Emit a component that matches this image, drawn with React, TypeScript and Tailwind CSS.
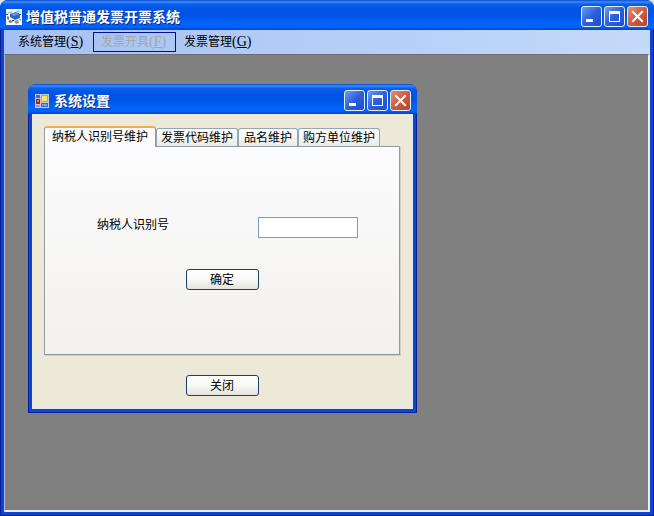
import React, { useState } from 'react';

interface MenuItem {
  label: string;
  hotkey: string;
  disabled?: boolean;
}

const menuItems: MenuItem[] = [
  { label: '系统管理', hotkey: 'S' },
  { label: '发票开具', hotkey: 'F', disabled: true },
  { label: '发票管理', hotkey: 'G' },
];

const tabs = ['纳税人识别号维护', '发票代码维护', '品名维护', '购方单位维护'];

const AppIcon = () => (
  <svg width="16" height="16" viewBox="0 0 16 16" aria-hidden="true">
    <rect width="16" height="16" fill="#f4f7fb" />
    <path d="M1 4l4-2 2 1-3 2zM10 2l3-1 2 2-3 1z" fill="#b4c4da" />
    <path d="M4 5l6-2 4 2v4l-5 2-5-3z" fill="#2f66c4" />
    <path d="M5 5l5-1 3 1-5 2z" fill="#6d9be8" />
    <path d="M1 7l2 1v3l-2-1zM2 12l3-1 2 2-3 1z" fill="#6f7c8c" />
    <path d="M8 12l4-1 1 3-3 1zM13 10l2 0v2z" fill="#8c99aa" />
    <path d="M0 5h2v1H0zM6 11h2v1H6zM14 5h1v1h-1z" fill="#33465f" />
  </svg>
);

const FormIcon = () => (
  <svg width="16" height="16" viewBox="-1 -1 16 16" aria-hidden="true">
    <rect width="14" height="14" fill="#c5cbd8" />
    <rect x="1" y="1" width="4" height="3" fill="#4a6cb4" />
    <rect x="6" y="1" width="7" height="7" fill="#e3a21a" />
    <rect x="7" y="2" width="5" height="5" fill="#ffe07a" />
    <rect x="1" y="5" width="4" height="5" fill="#a8241c" />
    <rect x="2" y="6" width="2" height="2" fill="#e8705c" />
    <rect x="1" y="11" width="4" height="2" fill="#8fa0c2" />
    <rect x="6" y="9" width="7" height="4" fill="#3f68b8" />
    <rect x="7" y="10" width="5" height="2" fill="#7d9fe0" />
  </svg>
);

const captionButton =
  'flex size-[21px] items-center justify-center rounded-[3px] border border-[#e6eefc] bg-linear-to-br';

const CaptionButtons = () => (
  <div className="flex gap-0.5">
    <button type="button" aria-label="最小化" className={`${captionButton} from-[#6f9bf2] via-[#2c5fdc] to-[#1b4fd0]`}>
      <svg width="19" height="19" viewBox="0 0 19 19">
        <rect x="4" y="12" width="7" height="3" fill="#fff" />
      </svg>
    </button>
    <button type="button" aria-label="最大化" className={`${captionButton} from-[#6f9bf2] via-[#2c5fdc] to-[#1b4fd0]`}>
      <svg width="19" height="19" viewBox="0 0 19 19">
        <path d="M4 4h11v11H4zM5 7v7h9V7z" fill="#fff" fillRule="evenodd" />
      </svg>
    </button>
    <button type="button" aria-label="关闭窗口" className={`${captionButton} from-[#e28f7c] via-[#cf5a40] to-[#b8442c]`}>
      <svg width="19" height="19" viewBox="0 0 19 19">
        <path d="M5 5l9 9M14 5l-9 9" stroke="#fff" strokeWidth="2" strokeLinecap="square" />
      </svg>
    </button>
  </div>
);

interface TitleBarProps {
  title: string;
  icon: React.ReactNode;
}

const TitleBar: React.FC<TitleBarProps> = ({ title, icon }) => (
  <header className="flex h-[30px] items-center justify-between bg-[linear-gradient(180deg,#0a45c8_0%,#3b8df5_6%,#0a5fee_14%,#0054e3_30%,#0055e8_55%,#0264fc_80%,#0262f8_90%,#0043cf_100%)] pt-[3px] pr-[6px] pl-[6px]">
    <div className="flex items-center gap-1">
      {icon}
      <h1 className="text-sm leading-4 font-bold text-white [text-shadow:1px_1px_#0a2a80]">{title}</h1>
    </div>
    <CaptionButtons />
  </header>
);

const pushButton =
  'h-[21px] w-[73px] rounded-[3px] border border-[#1c3f66] bg-linear-to-b from-white via-[#f8f8f6] to-[#e4e3dc] leading-4';

const SettingsWindow = () => {
  const [activeTab, setActiveTab] = useState(0);

  return (
    <section className="absolute top-[30px] left-[23px] -mt-px w-[389px] overflow-hidden rounded-t-lg bg-[#0a35c0]">
      <TitleBar title="系统设置" icon={<FormIcon />} />
      <div className="border-x border-b border-[#06209c]">
        <div className="border-x-[3px] border-b-[3px] border-[#0f45cc]">
          <div className="flex flex-col items-center border-r border-b border-[#dcebf5] bg-[#ece9d8] px-3 pt-3 pb-3">
            <div role="tablist" className="flex w-full items-end">
              {tabs.map((tab, index) => (
                <button
                  key={tab}
                  type="button"
                  role="tab"
                  aria-selected={activeTab === index}
                  onClick={() => setActiveTab(index)}
                  className={
                    activeTab === index
                      ? 'z-10 -mb-px h-[21px] rounded-t-[3px] border border-t-2 border-b-0 border-[#919b9c] border-t-[#eeb04a] bg-[#fcfcfe] px-[7px] pb-0.5 leading-4'
                      : 'h-[18px] min-w-[60px] rounded-t-[3px] border border-b-0 border-[#91a7b4] bg-linear-to-b from-white to-[#ebebe6] px-1 leading-4'
                  }
                >
                  {tab}
                </button>
              ))}
            </div>
            <form
              className="flex w-full flex-col items-center border border-[#919b9c] bg-linear-to-b from-[#fcfcfe] to-[#f2f1ed] pt-[70px] pb-16 shadow-[1px_1px_#d0cebf]"
              onSubmit={(e) => e.preventDefault()}
            >
              <div className="flex w-full items-start justify-between pr-[41px] pl-[52px]">
                <label htmlFor="taxpayer">纳税人识别号</label>
                <input id="taxpayer" type="text" className="h-[21px] w-[100px] border border-[#7f9db9] bg-white px-1" />
              </div>
              <button type="submit" className={`${pushButton} mt-[31px]`}>
                确定
              </button>
            </form>
            <button type="button" className={`${pushButton} mt-5`}>
              关闭
            </button>
          </div>
        </div>
      </div>
    </section>
  );
};

const App = () => (
  <div className="bg-[#dfe3ea] font-['Liberation_Sans','Noto_Sans_CJK_SC',sans-serif] text-xs leading-4 text-black">
    <div className="flex min-h-screen flex-col overflow-hidden rounded-t-lg bg-[#0a35c0]">
      <TitleBar title="增值税普通发票开票系统" icon={<AppIcon />} />
      <div className="flex grow flex-col border-x border-b border-[#06209c]">
        <div className="flex grow flex-col border-x-[3px] border-b-[3px] border-[#0f45cc]">
          <nav className="flex h-6 items-center bg-linear-to-r from-[#a5c0f4] to-[#c4dafa] pl-[6px]">
            {menuItems.map((item) => (
              <button
                key={item.label}
                type="button"
                disabled={item.disabled}
                className={`flex h-5 min-w-[83px] items-center border px-[7px] ${
                  item.disabled ? 'border-[#00108c] text-[#a5a8a5]' : 'border-transparent'
                }`}
              >
                {item.label}
                <span className="font-['Liberation_Serif',serif] text-sm leading-4">
                  (<u>{item.hotkey}</u>)
                </span>
              </button>
            ))}
          </nav>
          <main className="relative grow border-t border-r-2 border-b-2 border-l border-t-[#6e6e6e] border-r-[#e6f0f4] border-b-[#e6f0f4] border-l-[#a9bcd8] bg-[#808080]">
            <SettingsWindow />
          </main>
        </div>
      </div>
    </div>
  </div>
);

export default App;
